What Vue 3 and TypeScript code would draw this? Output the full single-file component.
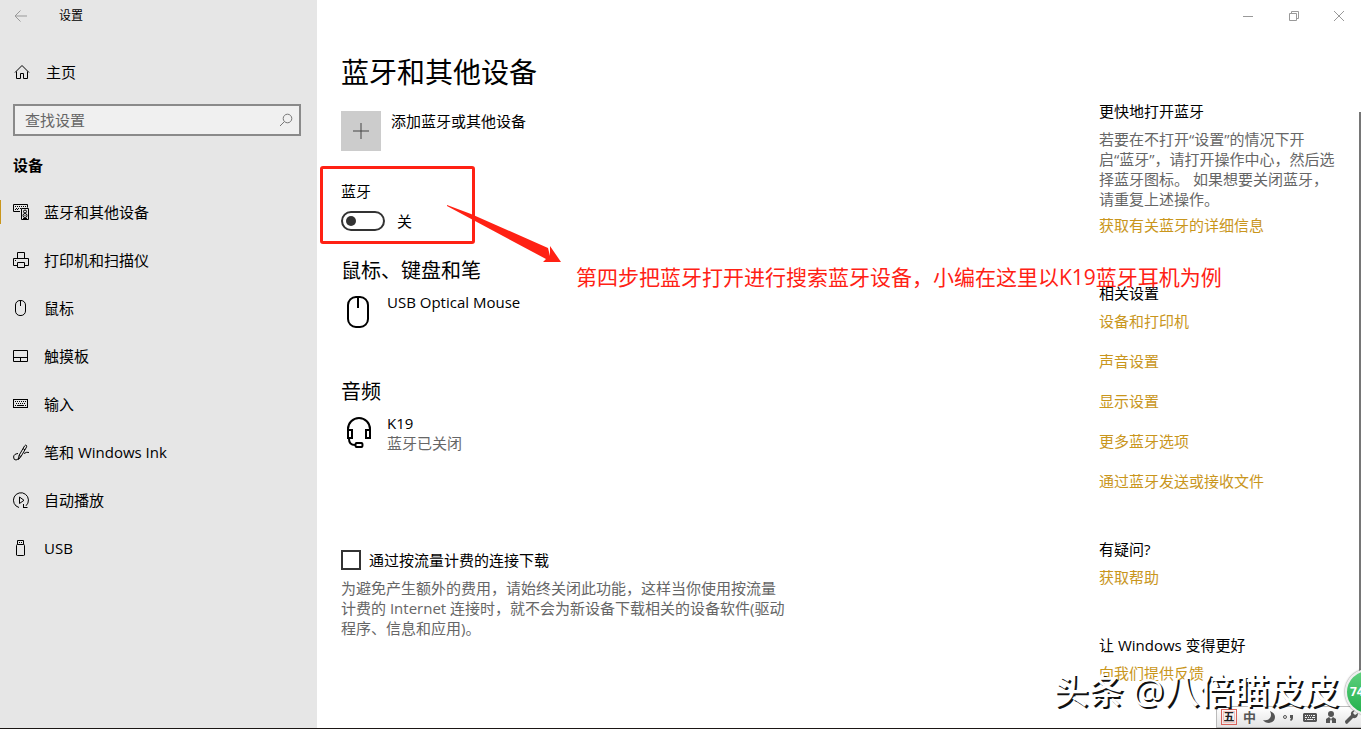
<script setup lang="ts">
import { ref } from 'vue'

interface NavItem {
  id: string
  label: string
}

const navItems: NavItem[] = [
  { id: 'bluetooth', label: '蓝牙和其他设备' },
  { id: 'printer', label: '打印机和扫描仪' },
  { id: 'mouse', label: '鼠标' },
  { id: 'touchpad', label: '触摸板' },
  { id: 'typing', label: '输入' },
  { id: 'pen', label: '笔和 Windows Ink' },
  { id: 'autoplay', label: '自动播放' },
  { id: 'usb', label: 'USB' },
]

const relatedLinks: string[] = ['设备和打印机', '声音设置', '显示设置', '更多蓝牙选项', '通过蓝牙发送或接收文件']

const active = ref('bluetooth')
const query = ref('')
const bluetoothOn = ref(false)
const metered = ref(false)
</script>

<template>
  <div class="window">
    <aside class="sidebar">
      <div class="titlebar">
        <button class="back" type="button" aria-label="返回">
          <svg width="14" height="12" viewBox="0 0 14 12"><path d="M13 6H1M6.500 .5 1 6l5.500 5.500" /></svg>
        </button>
        <span class="app-name">设置</span>
      </div>
      <a class="home" href="#home">
        <svg width="16" height="16" viewBox="0 0 16 16"><path d="M1 8.500 8 1.500l7 7M2.500 7.500v7h4v-5h3v5h4v-7" /></svg>
        <span>主页</span>
      </a>
      <div class="search">
        <input v-model="query" type="text" placeholder="查找设置" aria-label="查找设置" />
        <svg width="14" height="14" viewBox="0 0 14 14"><circle cx="8.500" cy="5.500" r="4.300" /><path d="M5.400 8.600 1 13" /></svg>
      </div>
      <h2 class="group">设备</h2>
      <nav>
        <a
          v-for="item in navItems"
          :key="item.id"
          :href="'#' + item.id"
          class="nav-item"
          :class="{ active: active === item.id }"
          @click.prevent="active = item.id"
        >
          <svg width="17" height="17" viewBox="0 0 17 17">
            <template v-if="item.id === 'bluetooth'">
              <path d="M7 7.500H.5v-7h14v3M8.500 4.500h7v11h-7z" />
              <path d="M2 2.500h12M3 4.500h5M2 5.500h4" stroke-dasharray="1 1" />
              <circle cx="12" cy="7.500" r="1.500" /><circle cx="12" cy="11.500" r="2" /><path d="M11.500 11.500h1M10 14.500h4" />
            </template>
            <template v-else-if="item.id === 'printer'">
              <path d="M4.500 6.500v-6h7v6M4.500 13.500h-4v-7h15v7h-4M4.500 10.500h7v5h-7zM2 8.500h1" />
            </template>
            <template v-else-if="item.id === 'mouse'">
              <rect x="2.500" y=".5" width="10" height="15" rx="4.500" /><path d="M7.500 1v5" />
            </template>
            <template v-else-if="item.id === 'touchpad'">
              <path d="M.5 2.500h14v11H.5zM.5 9.500h14M7.500 9.500v4" />
            </template>
            <template v-else-if="item.id === 'typing'">
              <rect x=".5" y="3.500" width="14" height="8" />
              <path d="M2 5.500h12M3 7.500h10" stroke-dasharray="1 1" /><path d="M2 9.500h1M4 9.500h7M12 9.500h1" />
            </template>
            <template v-else-if="item.id === 'pen'">
              <path d="M5.500 15.500 6 11.500 11.500 2Q13 .3 13.500 1.500T13 4L8 12.500ZM10 4.500l2 1.500M6 11.500l2 1" />
              <path d="M5 9.500Q.7 10 .6 13T3 16q2-.2 3-2.500M11 9.500q3-2 5-1" />
            </template>
            <template v-else-if="item.id === 'autoplay'">
              <path d="M6 15.500A7.500 7.500 0 1 1 13 13.800M10.500 12v4M10.500 15.500h4M6.500 5v6.500L11 8.300Z" />
            </template>
            <template v-else>
              <path d="M3.500 15V5.500q0-1 1-1h6q1 0 1 1V15q0 .5-1 .5h-6q-1 0-1-.5ZM4.500 4.500v-4h6v4M6 2.500h1M8 2.500h1" />
            </template>
          </svg>
          <span>{{ item.label }}</span>
        </a>
      </nav>
    </aside>

    <div class="content">
      <div class="window-controls">
        <button type="button" aria-label="最小化"><svg width="12" height="12" viewBox="0 0 12 12"><path d="M1 6.500h10" /></svg></button>
        <button type="button" aria-label="还原"><svg width="12" height="12" viewBox="0 0 12 12"><path d="M1.500 3.500h7v7h-7zM3.500 3.500v-2h7v7h-2" /></svg></button>
        <button type="button" aria-label="关闭"><svg width="12" height="12" viewBox="0 0 12 12"><path d="m1 1 10 10M11 1 1 11" /></svg></button>
      </div>

      <div class="columns">
        <main>
          <h1>蓝牙和其他设备</h1>
          <button class="add" type="button">
            <span class="plus"><svg width="16" height="16" viewBox="0 0 16 16"><path d="M0 8h16M8 0v16" /></svg></span>
            <span>添加蓝牙或其他设备</span>
          </button>

          <label class="switch-label" for="bt-switch">蓝牙</label>
          <div class="switch-row">
            <input id="bt-switch" v-model="bluetoothOn" type="checkbox" role="switch" />
            <span>{{ bluetoothOn ? '开' : '关' }}</span>
          </div>

          <section class="devices">
            <h2>鼠标、键盘和笔</h2>
            <div class="device">
              <svg width="34" height="38" viewBox="0 0 34 38"><rect x="7" y="5" width="20" height="30" rx="8" /><path d="M17 5v11" /></svg>
              <div>USB Optical Mouse</div>
            </div>
          </section>
          <section class="devices audio">
            <h2>音频</h2>
            <div class="device">
              <svg width="34" height="38" viewBox="0 0 34 38">
                <path d="M7 17v-1a11 11 0 0 1 22 0v1M7 17h4v8H7zM25 17h4v8h-4zM8 25v1q0 6 6 6h1M15.500 30h5q1 0 1 2t-1 2h-5q-1 0-1-2t1-2Z" />
              </svg>
              <div>K19<p>蓝牙已关闭</p></div>
            </div>
          </section>

          <label class="metered"><input v-model="metered" type="checkbox" /><span>通过按流量计费的连接下载</span></label>
          <p class="note">为避免产生额外的费用，请始终关闭此功能，这样当你使用按流量计费的 Internet 连接时，就不会为新设备下载相关的设备软件(驱动程序、信息和应用)。</p>
        </main>

        <aside class="related">
          <section>
            <h3>更快地打开蓝牙</h3>
            <p>若要在不打开“设置”的情况下开启“蓝牙”，请打开操作中心，然后选择蓝牙图标。 如果想要关闭蓝牙，请重复上述操作。</p>
            <a href="#details">获取有关蓝牙的详细信息</a>
          </section>
          <section class="settings-links">
            <h3>相关设置</h3>
            <a v-for="link in relatedLinks" :key="link" href="#related">{{ link }}</a>
          </section>
          <section>
            <h3>有疑问?</h3>
            <a href="#help">获取帮助</a>
          </section>
          <section>
            <h3>让 Windows 变得更好</h3>
            <a href="#feedback">向我们提供反馈</a>
          </section>
        </aside>
      </div>
    </div>

    <div class="scroll-thumb"></div>

    <div class="highlight"></div>
    <svg class="arrow" width="116" height="62" viewBox="0 0 116 62"><path d="M1 1 25 10 102 44 104 52 104 42 115 58 97 58 100 55 85 47 1 2Z" /></svg>
    <div class="callout">第四步把蓝牙打开进行搜索蓝牙设备，小编在这里以K19蓝牙耳机为例</div>

    <div class="ime">
      <span class="wubi">五</span>
      <span class="glyph">中</span>
      <svg width="14" height="14" viewBox="0 0 14 14"><path d="M8 1q5 2 5 6 0 5-6 6-4 0-6-3 5 1 7-2t0-7Z" /></svg>
      <svg width="14" height="14" viewBox="0 0 14 14"><circle class="ring" cx="3" cy="7" r="1.500" /><path d="M8 5h3v3q0 2-2 3l-1-1 1-2H8Z" /></svg>
      <svg width="16" height="14" viewBox="0 0 16 14"><path fill-rule="evenodd" d="M2 3h12l1 1v7l-1 1H2l-1-1V4ZM3 5v1h1V5Zm2 0v1h1V5Zm2 0v1h1V5Zm2 0v1h1V5Zm2 0v1h2V5ZM3 7v1h2V7Zm3 0v1h1V7Zm2 0v1h1V7Zm2 0v1h3V7ZM3 9v1h1V9Zm2 0v1h6V9Zm7 0v1h1V9Z" /></svg>
      <svg width="14" height="14" viewBox="0 0 14 14"><circle cx="7" cy="4" r="3" /><path d="M2 13V9l3-2 2 2 2-2 3 2v4H8V9L7 11 6 9v4Z" /></svg>
      <svg width="14" height="14" viewBox="0 0 14 14"><path d="m1 11 6-6q-1-4 4-5L9 3l2 2 3-2q0 6-5 5l-6 6q-2 0-2-3Z" /></svg>
    </div>
    <div class="watermark">头条 @八倍瞄皮皮</div>
    <div class="badge">74</div>
  </div>
</template>

<style>
body {
  margin: 0;
}
</style>

<style scoped>
* {
  box-sizing: border-box;
}
.window {
  position: relative;
  display: flex;
  min-height: 100vh;
  overflow: hidden;
  border-bottom: 1px solid #1b1614;
  background: #fff;
  color: #000;
  font: 15px/20px "Open Sans", "Noto Sans CJK SC", sans-serif;
}
h1, h2, h3, p {
  margin: 0;
  font-weight: 400;
}
h3 {
  font-size: 15px;
}
a {
  color: inherit;
  text-decoration: none;
}
button {
  padding: 0;
  border: 0;
  background: none;
  color: inherit;
  font: inherit;
}
svg {
  flex: none;
  fill: none;
  stroke: #000;
}
.sidebar {
  flex: none;
  width: 317px;
  background: #e6e6e6;
}
.titlebar {
  display: flex;
  align-items: center;
  height: 32px;
  font-size: 12px;
}
.back {
  display: flex;
  width: 59px;
  padding-left: 14px;
}
.back svg,
.window-controls svg {
  stroke: #999;
}
.home {
  display: flex;
  align-items: center;
  gap: 16px;
  height: 48px;
  margin-top: 16px;
  padding-left: 14px;
}
.search {
  display: flex;
  align-items: center;
  height: 32px;
  margin: 8px 16px 0 13px;
  padding: 0 6px 0 10px;
  border: 2px solid #8a8a8a;
  background: #f0f0f0;
}
.search input {
  flex: 1;
  min-width: 0;
  padding: 0;
  border: 0;
  outline: 0;
  background: none;
  font: inherit;
}
.search input::placeholder {
  color: #666;
  opacity: 1;
}
.search svg {
  stroke: #777;
}
.group {
  margin: 19px 0 13px 13px;
  font-size: 15px;
  font-weight: 700;
}
.nav-item {
  position: relative;
  display: flex;
  align-items: center;
  gap: 14px;
  height: 48px;
  padding-left: 13px;
}
.nav-item.active::before {
  content: "";
  position: absolute;
  left: 0;
  width: 1px;
  height: 24px;
  background: #c9961c;
}
.content {
  flex: 1;
  min-width: 0;
}
.window-controls {
  display: flex;
  justify-content: flex-end;
  height: 32px;
}
.window-controls button {
  display: flex;
  align-items: center;
  justify-content: center;
  width: 46px;
}
.window-controls button:last-child {
  width: 44px;
}
.columns {
  display: flex;
  justify-content: space-between;
  padding: 22px 24px 0;
}
main {
  flex: 0 1 445px;
}
h1 {
  font-size: 28px;
  line-height: 36px;
}
.add {
  display: flex;
  gap: 10px;
  margin-top: 21px;
  text-align: left;
}
.plus {
  display: flex;
  align-items: center;
  justify-content: center;
  width: 40px;
  height: 40px;
  background: #ccc;
}
.plus svg {
  stroke: #444;
}
.switch-label {
  display: block;
  margin-top: 30px;
}
.switch-row {
  display: flex;
  align-items: center;
  gap: 12px;
  height: 20px;
  margin-top: 10px;
}
.switch-row input {
  appearance: none;
  display: flex;
  align-items: center;
  width: 44px;
  height: 20px;
  margin: 0;
  padding: 0 3px;
  border: 2px solid #333;
  border-radius: 10px;
}
.switch-row input::before {
  content: "";
  width: 10px;
  height: 10px;
  border-radius: 50%;
  background: #333;
}
.switch-row input:checked {
  justify-content: flex-end;
}
.devices {
  margin-top: 26px;
}
.devices h2 {
  font-size: 20px;
  line-height: 28px;
}
.device {
  display: flex;
  gap: 12px;
  min-height: 64px;
  margin-top: 7px;
}
.device svg {
  stroke-width: 2px;
}
.device p,
.note,
.related p {
  color: #666;
}
.audio {
  margin-top: 22px;
}
.metered {
  display: flex;
  align-items: center;
  gap: 8px;
  height: 20px;
  margin-top: 73px;
}
.metered input {
  appearance: none;
  width: 20px;
  height: 20px;
  margin: 0;
  border: 2px solid #333;
}
.metered input:checked {
  background: #333;
}
.note {
  margin-top: 8px;
}
.related {
  flex: none;
  width: 238px;
  padding-top: 47px;
}
.related a {
  display: block;
  margin-top: 8px;
  color: #c9961c;
}
.related p {
  margin-top: 8px;
}
.related p + a {
  margin-top: 6px;
}
.related section + section {
  margin-top: 48px;
}
.settings-links a + a {
  margin-top: 20px;
}
.scroll-thumb {
  position: absolute;
  top: 112px;
  right: 0;
  bottom: 0;
  width: 2px;
  background: #767676;
}
.highlight {
  position: absolute;
  top: 166px;
  left: 320px;
  width: 155px;
  height: 78px;
  border: 3px solid #ff2114;
  border-radius: 3px;
}
.arrow {
  position: absolute;
  top: 204px;
  left: 446px;
  fill: #ff2114;
  stroke: none;
}
.callout {
  position: absolute;
  top: 262px;
  left: 576px;
  color: #ff2114;
  font-size: 21px;
  line-height: 30px;
  white-space: nowrap;
}
.ime {
  position: absolute;
  right: -4px;
  bottom: 0;
  display: flex;
  align-items: center;
  gap: 6px;
  width: 149px;
  height: 22px;
  padding-left: 4px;
  border: 1px solid #bbb;
  background: linear-gradient(#fff, #e4e4e4);
  color: #555;
}
.ime svg {
  fill: #555;
  stroke: none;
}
.ime .ring {
  fill: none;
  stroke: #555;
}
.wubi {
  width: 16px;
  height: 16px;
  border: 1px solid #d9625a;
  outline: 1px solid #f3c3be;
  outline-offset: -3px;
  color: #222;
  font-size: 11px;
  font-weight: 700;
  line-height: 14px;
  text-align: center;
}
.glyph {
  font-size: 13px;
  font-weight: 700;
}
.watermark {
  position: absolute;
  right: 22px;
  bottom: 14px;
  color: #fff;
  font-size: 35px;
  font-weight: 500;
  line-height: 46px;
  text-shadow: 2px 2px 0 #111;
  white-space: nowrap;
}
.badge {
  position: absolute;
  right: -30px;
  bottom: 13px;
  width: 46px;
  height: 46px;
  padding-left: 3px;
  border: 2px solid #eee;
  border-radius: 50%;
  background: linear-gradient(#5fd07e, #23b14d);
  box-shadow: 0 0 2px #555;
  color: #fff;
  font-size: 12px;
  font-weight: 700;
  line-height: 42px;
}
</style>
